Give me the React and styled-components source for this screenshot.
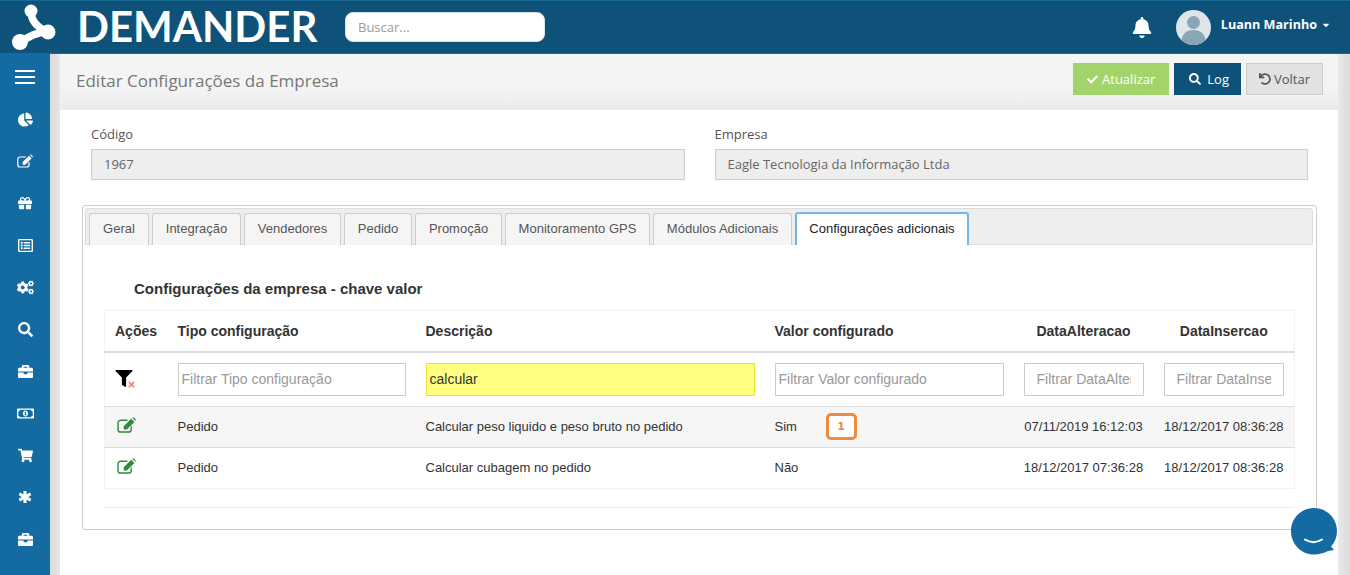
import React from 'react';
import styled, { createGlobalStyle, css } from 'styled-components';
import {
  FaBell,
  FaBriefcase,
  FaCaretDown,
  FaChartPie,
  FaCheck,
  FaCogs,
  FaAsterisk,
  FaFilter,
  FaGift,
  FaRegListAlt,
  FaRegMoneyBillAlt,
  FaSearch,
  FaShoppingCart,
  FaTimes,
  FaUndo,
} from 'react-icons/fa';

const GlobalStyle = createGlobalStyle`
  html, body {
    margin: 0;
    padding: 0;
    height: 100%;
    overflow: hidden;
    background: #fff;
    font-family: "Open Sans", "Liberation Sans", sans-serif;
  }
  * {
    box-sizing: border-box;
  }
`;

const Page = styled.div`
  width: 1350px;
  height: 575px;
  display: flex;
  flex-direction: column;
  position: relative;
  overflow: hidden;
`;

const TopBar = styled.header`
  height: 54px;
  flex: none;
  display: flex;
  align-items: center;
  background: #0e5279;
  border-top: 1px solid #1a6a96;
  border-bottom: 1px solid #1a6a96;
  padding: 0 19px 0 12px;
`;

const LogoMark = styled.svg`
  width: 50px;
  height: 50px;
  flex: none;
`;

const LogoText = styled.div`
  margin: 0 0 2px 15px;
  width: 240px;
  color: #fff;
  font-family: "Lato", sans-serif;
  font-weight: 700;
  font-size: 42px;
  line-height: 42px;
  white-space: nowrap;
`;

const SearchBox = styled.input`
  margin-left: 28px;
  width: 200px;
  height: 30px;
  border: 1px solid #d8e2e8;
  border-radius: 8px;
  padding: 0 12px;
  background: #fff;
  font-family: "Open Sans", sans-serif;
  font-size: 13px;
  outline: none;
  &::placeholder {
    color: #999;
    opacity: 1;
  }
`;

const UserArea = styled.div`
  margin-left: auto;
  display: flex;
  align-items: center;
  color: #fff;
`;

const BellIcon = styled(FaBell)`
  width: 20px;
  height: 21px;
  margin-right: 24px;
`;

const Avatar = styled.svg`
  width: 35px;
  height: 35px;
  border-radius: 50%;
  margin-right: 10px;
`;

const UserName = styled.span`
  font-size: 12.6px;
  font-weight: 700;
  margin-bottom: 5px;
`;

const UserCaret = styled(FaCaretDown)`
  width: 10px;
  height: 10px;
  margin: 0 0 4px 4px;
`;

const Body = styled.div`
  flex: 1;
  display: flex;
  min-height: 0;
`;

const Sidebar = styled.nav`
  width: 50px;
  flex: none;
  background: #146ba1;
  display: flex;
  flex-direction: column;
  align-items: center;
  padding-top: 2px;
  color: #fff;
`;

const SideItem = styled.div`
  height: 42px;
  flex: none;
  display: flex;
  align-items: center;
  justify-content: center;
  font-size: ${(p) => p.$size || 15}px;
  ${(p) =>
    p.$heavy &&
    css`
      svg path {
        stroke: currentColor;
        stroke-width: 50;
      }
    `}
`;

const Burger = styled.span`
  display: block;
  width: 20px;
  height: 14px;
  border-top: 2px solid #fff;
  border-bottom: 2px solid #fff;
  position: relative;
  &::after {
    content: '';
    position: absolute;
    left: 0;
    right: 0;
    top: 4px;
    height: 2px;
    background: #fff;
  }
`;

const ContentArea = styled.main`
  flex: 1;
  display: flex;
  flex-direction: column;
  min-width: 0;
  background: linear-gradient(to right, #dadada, #e6e6e6 10px, #f3f3f3 10px);
  padding: 0 12px 0 10px;
  position: relative;
  &::after {
    content: '';
    position: absolute;
    top: 0;
    bottom: 0;
    right: 0;
    width: 12px;
    background: linear-gradient(to right, #e9e9e9, #dcdcdc);
  }
`;

const TitleBar = styled.div`
  height: 56px;
  flex: none;
  display: flex;
  align-items: center;
  padding: 0 15px 0 16px;
  background: linear-gradient(to bottom, #f4f4f4 60%, #ebebeb);
  position: relative;
  z-index: 1;
`;

const PageTitle = styled.h1`
  margin: 0 0 3px;
  font-size: 17px;
  font-weight: 400;
  color: #777;
`;

const Actions = styled.div`
  margin-left: auto;
  display: flex;
  gap: 5px;
  margin-bottom: 6px;
`;

const ActionButton = styled.button`
  height: 32px;
  display: flex;
  align-items: center;
  gap: ${(p) => p.$gap || 4}px;
  padding: ${(p) => p.$pad || '0 13px'};
  border: 1px solid ${(p) => p.$border};
  background: ${(p) => p.$bg};
  color: ${(p) => p.$color};
  font-family: "Open Sans", sans-serif;
  font-size: 13px;
  svg {
    width: ${(p) => p.$icon || 11}px;
    height: ${(p) => p.$icon || 11}px;
  }
`;

const Sheet = styled.section`
  flex: 1;
  background: #fff;
  padding: 14px 22px 0;
  position: relative;
  z-index: 1;
`;

const FormRow = styled.div`
  display: flex;
  gap: 30px;
  padding: 0 8px 0 9px;
  margin-bottom: 25px;
`;

const Field = styled.div`
  flex: 1;
`;

const FieldLabel = styled.label`
  display: block;
  font-size: 13px;
  line-height: 20px;
  color: #555;
  margin: 0 0 5px;
`;

const ReadOnlyInput = styled.div`
  height: 31px;
  display: flex;
  align-items: center;
  padding: 0 12px 2px;
  background: #eee;
  border: 1px solid #ccc;
  font-size: 13px;
  color: #666;
`;

const TabPanel = styled.div`
  width: 1235px;
  height: 325px;
  border: 1px solid #ccc;
  border-radius: 3px;
  padding: 2px 3px 0 2px;
  font-family: "Liberation Sans", Arial, sans-serif;
`;

const TabStrip = styled.div`
  height: 37px;
  display: flex;
  align-items: flex-end;
  gap: 3px;
  padding-left: 3px;
  background: #eee;
  border: 1px solid #ddd;
  border-radius: 3px 3px 0 0;
`;

const Tab = styled.div`
  height: ${(p) => (p.$active ? 33 : 32)}px;
  width: ${(p) => p.$width}px;
  display: flex;
  align-items: center;
  justify-content: center;
  padding-bottom: 2px;
  font-size: 13px;
  color: ${(p) => (p.$active ? '#222' : '#555')};
  background: ${(p) => (p.$active ? '#fff' : '#f5f5f5')};
  border: 1px solid ${(p) => (p.$active ? '#74b6e8' : '#ccc')};
  border-width: ${(p) => (p.$active ? '2px 2px 0' : '1px 1px 0')};
  border-radius: 3px 3px 0 0;
  margin-bottom: -1px;
`;

const SectionHeading = styled.h3`
  margin: 35px 0 12px 49px;
  font-size: 15px;
  line-height: 18px;
  font-weight: 700;
  color: #333;
`;

const TableWrap = styled.div`
  margin-left: 19px;
  width: 1190px;
  padding-bottom: 18px;
  border-bottom: 1px solid #eee;
`;

const Table = styled.table`
  width: 1190px;
  table-layout: fixed;
  border-collapse: collapse;
  border: 1px solid #f2f2f2;
  font-size: 13px;
  color: #333;
`;

const HeadCell = styled.th`
  height: 41px;
  padding: 0 10px;
  font-size: 14px;
  font-weight: 700;
  color: #333;
  text-align: ${(p) => p.$align || 'left'};
  border-bottom: 2px solid #ddd;
`;

const FilterCell = styled.td`
  height: 55px;
  padding: 0 10px;
  border-bottom: 1px solid #ddd;
`;

const Cell = styled.td`
  height: 41px;
  padding: 0 10px 1px;
  border-bottom: 1px solid #ddd;
  text-align: ${(p) => p.$align || 'left'};
  white-space: nowrap;
`;

const Row = styled.tr`
  background: ${(p) => (p.$shaded ? '#f6f6f6' : '#fff')};
  &:last-child td {
    border-bottom: 1px solid #f2f2f2;
  }
`;

const FilterInput = styled.input`
  display: block;
  width: 100%;
  height: 33px;
  padding: 0 ${(p) => p.$pad || 3}px;
  border: 1px solid ${(p) => (p.$hit ? '#e6e23c' : '#ccc')};
  background: ${(p) => (p.$hit ? '#ffff80' : '#fff')};
  color: #333;
  font-family: "Liberation Sans", Arial, sans-serif;
  font-size: 14px;
  outline: none;
  &::placeholder {
    color: #999;
    opacity: 1;
  }
`;

const ClearFilter = styled.span`
  position: relative;
  display: block;
  width: 21px;
  height: 18px;
  color: #000;
  svg:first-child {
    width: 18px;
    height: 17px;
  }
`;

const ClearMark = styled(FaTimes)`
  position: absolute;
  right: 0;
  bottom: -1px;
  width: 9px;
  height: 9px;
  color: #f0877a;
`;

const EditSvg = styled.svg`
  display: block;
  width: ${(p) => p.$w}px;
  height: ${(p) => p.$h}px;
`;

const RowEdit = styled.div`
  color: #2e8b3c;
  margin: 0 0 3px 2px;
`;

const ValueWrap = styled.div`
  display: flex;
  align-items: center;
`;

const ValueText = styled.span`
  width: 51px;
`;

const Badge = styled.span`
  width: 31px;
  height: 27px;
  display: flex;
  align-items: center;
  justify-content: center;
  border: 3px solid #f08a3c;
  border-radius: 5px;
  background: #fff;
  color: #f08a3c;
  font-family: "DejaVu Sans", sans-serif;
  font-size: 11px;
  font-weight: 700;
`;

const ChatBubble = styled.svg`
  position: absolute;
  left: 1291px;
  top: 508px;
  width: 46px;
  height: 48px;
  z-index: 2;
`;

function EditGlyph({ w, h }) {
  return (
    <EditSvg $w={w} $h={h} viewBox="0 0 20 17">
      <path
        d="M15 10v3.2A2.8 2.8 0 0 1 12.2 16H3.8A2.8 2.8 0 0 1 1 13.200V6.300A2.800 2.800 0 0 1 3.800 3.500H11"
        fill="none"
        stroke="currentColor"
        strokeWidth="1.500"
      />
      <path d="M7 9.800 L15 1.800 L18.400 5.200 L10.400 13.200 L7 13.200 Z" fill="currentColor" />
      <path d="M16 0.800 Q17 0 18 0.800 L19.400 2.200 Q20 3.200 19.400 4.200 Z" fill="currentColor" />
    </EditSvg>
  );
}

const sideItems = [
  { icon: FaChartPie },
  { edit: true },
  { icon: FaGift, size: 14 },
  { icon: FaRegListAlt },
  { icon: FaCogs, size: 17 },
  { icon: FaSearch },
  { icon: FaBriefcase },
  { icon: FaRegMoneyBillAlt, size: 17 },
  { icon: FaShoppingCart },
  { icon: FaAsterisk, size: 12, heavy: true },
  { icon: FaBriefcase },
];

const tabs = [
  { label: 'Geral', width: 60 },
  { label: 'Integração', width: 89 },
  { label: 'Vendedores', width: 97 },
  { label: 'Pedido', width: 68 },
  { label: 'Promoção', width: 87 },
  { label: 'Monitoramento GPS', width: 145 },
  { label: 'Módulos Adicionais', width: 139 },
  { label: 'Configurações adicionais', width: 174, active: true },
];

const rows = [
  {
    tipo: 'Pedido',
    descricao: 'Calcular peso liquido e peso bruto no pedido',
    valor: 'Sim',
    badge: '1',
    alteracao: '07/11/2019 16:12:03',
    insercao: '18/12/2017 08:36:28',
  },
  {
    tipo: 'Pedido',
    descricao: 'Calcular cubagem no pedido',
    valor: 'Não',
    alteracao: '18/12/2017 07:36:28',
    insercao: '18/12/2017 08:36:28',
  },
];

function Logo() {
  return (
    <LogoMark viewBox="0 0 50 50">
      <g fill="none" stroke="#fff" strokeWidth="7.500" strokeLinecap="round">
        <path d="M19 9 C19 20 26 26 36 30" />
        <path d="M36 30 C26 30 20 33 8 40" />
      </g>
      <circle cx="19" cy="9" r="6.500" fill="#fff" />
      <circle cx="36" cy="30" r="7.500" fill="#fff" />
      <circle cx="8" cy="40" r="8" fill="#fff" />
    </LogoMark>
  );
}

export default function App() {
  return (
    <Page>
      <GlobalStyle />
      <TopBar>
        <Logo />
        <LogoText>DEMANDER</LogoText>
        <SearchBox placeholder="Buscar..." />
        <UserArea>
          <BellIcon />
          <Avatar viewBox="0 0 35 35">
            <rect width="35" height="35" fill="#dfe5ea" />
            <circle cx="17.500" cy="12.500" r="6.500" fill="#8aa5b5" />
            <path d="M5 35 C5 24 10 20 17.500 20 C25 20 30 24 30 35 Z" fill="#8aa5b5" />
          </Avatar>
          <UserName>Luann Marinho</UserName>
          <UserCaret />
        </UserArea>
      </TopBar>
      <Body>
        <Sidebar>
          <SideItem>
            <Burger />
          </SideItem>
          {sideItems.map((item, i) => {
            const Icon = item.icon;
            return (
              <SideItem key={i} $size={item.size} $heavy={item.heavy}>
                {item.edit ? <EditGlyph w={16} h={14} /> : <Icon />}
              </SideItem>
            );
          })}
        </Sidebar>
        <ContentArea>
          <TitleBar>
            <PageTitle>Editar Configurações da Empresa</PageTitle>
            <Actions>
              <ActionButton $bg="#a3d46c" $border="#a3d46c" $color="#fff">
                <FaCheck />
                Atualizar
              </ActionButton>
              <ActionButton $bg="#0e5279" $border="#0e5279" $color="#fff" $pad="0 11px 0 14px" $gap={6} $icon={12}>
                <FaSearch />
                Log
              </ActionButton>
              <ActionButton $bg="#e2e2e2" $border="#ccc" $color="#555" $pad="0 12px" $icon={12} $gap={3}>
                <FaUndo />
                Voltar
              </ActionButton>
            </Actions>
          </TitleBar>
          <Sheet>
            <FormRow>
              <Field>
                <FieldLabel>Código</FieldLabel>
                <ReadOnlyInput>1967</ReadOnlyInput>
              </Field>
              <Field>
                <FieldLabel>Empresa</FieldLabel>
                <ReadOnlyInput>Eagle Tecnologia da Informação Ltda</ReadOnlyInput>
              </Field>
            </FormRow>
            <TabPanel>
              <TabStrip>
                {tabs.map((tab) => (
                  <Tab key={tab.label} $width={tab.width} $active={tab.active}>
                    {tab.label}
                  </Tab>
                ))}
              </TabStrip>
              <SectionHeading>Configurações da empresa - chave valor</SectionHeading>
              <TableWrap>
                <Table>
                  <colgroup>
                    <col style={{ width: 63 }} />
                    <col style={{ width: 248 }} />
                    <col style={{ width: 349 }} />
                    <col style={{ width: 249 }} />
                    <col style={{ width: 140 }} />
                    <col style={{ width: 141 }} />
                  </colgroup>
                  <thead>
                    <tr>
                      <HeadCell>Ações</HeadCell>
                      <HeadCell>Tipo configuração</HeadCell>
                      <HeadCell>Descrição</HeadCell>
                      <HeadCell>Valor configurado</HeadCell>
                      <HeadCell $align="center">DataAlteracao</HeadCell>
                      <HeadCell $align="center">DataInsercao</HeadCell>
                    </tr>
                    <tr>
                      <FilterCell>
                        <ClearFilter>
                          <FaFilter />
                          <ClearMark />
                        </ClearFilter>
                      </FilterCell>
                      <FilterCell>
                        <FilterInput placeholder="Filtrar Tipo configuração" />
                      </FilterCell>
                      <FilterCell>
                        <FilterInput $hit defaultValue="calcular" />
                      </FilterCell>
                      <FilterCell>
                        <FilterInput placeholder="Filtrar Valor configurado" />
                      </FilterCell>
                      <FilterCell>
                        <FilterInput $pad={12} placeholder="Filtrar DataAlteracao" />
                      </FilterCell>
                      <FilterCell>
                        <FilterInput $pad={12} placeholder="Filtrar DataInsercao" />
                      </FilterCell>
                    </tr>
                  </thead>
                  <tbody>
                    {rows.map((row, i) => (
                      <Row key={row.descricao} $shaded={i === 0}>
                        <Cell>
                          <RowEdit>
                            <EditGlyph w={19} h={16} />
                          </RowEdit>
                        </Cell>
                        <Cell>{row.tipo}</Cell>
                        <Cell>{row.descricao}</Cell>
                        <Cell>
                          <ValueWrap>
                            <ValueText>{row.valor}</ValueText>
                            {row.badge && <Badge>{row.badge}</Badge>}
                          </ValueWrap>
                        </Cell>
                        <Cell $align="center">{row.alteracao}</Cell>
                        <Cell $align="center">{row.insercao}</Cell>
                      </Row>
                    ))}
                  </tbody>
                </Table>
              </TableWrap>
            </TabPanel>
          </Sheet>
        </ContentArea>
      </Body>
      <ChatBubble viewBox="0 0 46 48">
        <path
          d="M23 0 C35.700 0 46 10.300 46 23 C46 29 43.800 34.500 40 38.600 L43 42 L37 43 C33 45 28 46.500 23 46.500 C10.300 46.500 0 36 0 23 C0 10.300 10.300 0 23 0 Z"
          fill="#146ba1"
        />
        <path d="M14 31.500 C19 35 26 35 31 31.500" fill="none" stroke="#fff" strokeWidth="2" strokeLinecap="round" />
      </ChatBubble>
    </Page>
  );
}
